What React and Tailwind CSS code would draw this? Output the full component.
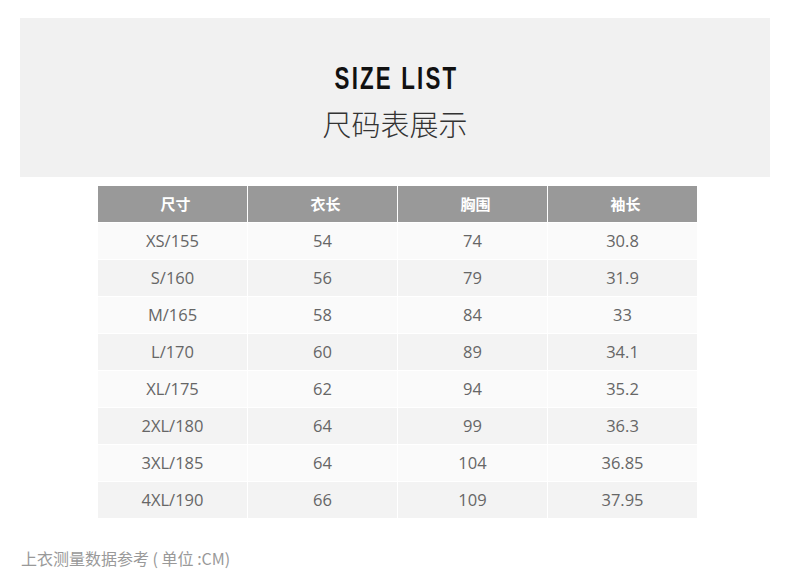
import React from 'react';

const rows = [
  ['XS/155', '54', '74', '30.8'],
  ['S/160', '56', '79', '31.9'],
  ['M/165', '58', '84', '33'],
  ['L/170', '60', '89', '34.1'],
  ['XL/175', '62', '94', '35.2'],
  ['2XL/180', '64', '99', '36.3'],
  ['3XL/185', '64', '104', '36.85'],
  ['4XL/190', '66', '109', '37.95'],
];

const headers = ['尺寸', '衣长', '胸围', '袖长'];

const App = () => {
  return (
    <div className="w-[790px] h-[585px] bg-white pt-[18px] font-['Open_Sans','Noto_Sans_CJK_SC',sans-serif]">
      <div className="mx-[20px] h-[159px] bg-[#f1f1f1] flex flex-col items-center pt-[44px]">
        <div className="pl-[3px] text-[31px] leading-[34px] font-bold text-[#111] tracking-[3px] font-['Liberation_Sans',sans-serif] scale-x-[0.72]">
          SIZE LIST
        </div>
        <div className="mt-[10px] text-[29px] leading-[34px] font-light text-[#333] font-['Noto_Sans_CJK_SC',sans-serif]">
          尺码表展示
        </div>
      </div>

      <div className="ml-[98px] mt-[9px] w-[599px] flex flex-col gap-px">
        <div className="grid grid-cols-4 gap-px">
          {headers.map((h) => (
            <div key={h} className="h-[36px] pl-[6px] bg-[#999999] flex items-center justify-center text-white text-[15px] font-bold font-['Noto_Sans_CJK_SC',sans-serif]">
              {h}
            </div>
          ))}
        </div>
        {rows.map((r, i) => (
          <div key={r[0]} className="grid grid-cols-4 gap-px">
            {r.map((c, j) => (
              <div
                key={j}
                className={`h-[36px] flex items-center justify-center text-[16.5px] text-[#666] ${i % 2 === 0 ? 'bg-[#fafafa]' : 'bg-[#f3f3f3]'}`}
              >
                {c}
              </div>
            ))}
          </div>
        ))}
      </div>

      <div className="ml-[21px] mt-[30px] text-[16px] leading-[20px] text-[#999] font-['Noto_Sans_CJK_SC',sans-serif]">
        上衣测量数据参考 ( 单位 :CM)
      </div>
    </div>
  );
};

export default App;
